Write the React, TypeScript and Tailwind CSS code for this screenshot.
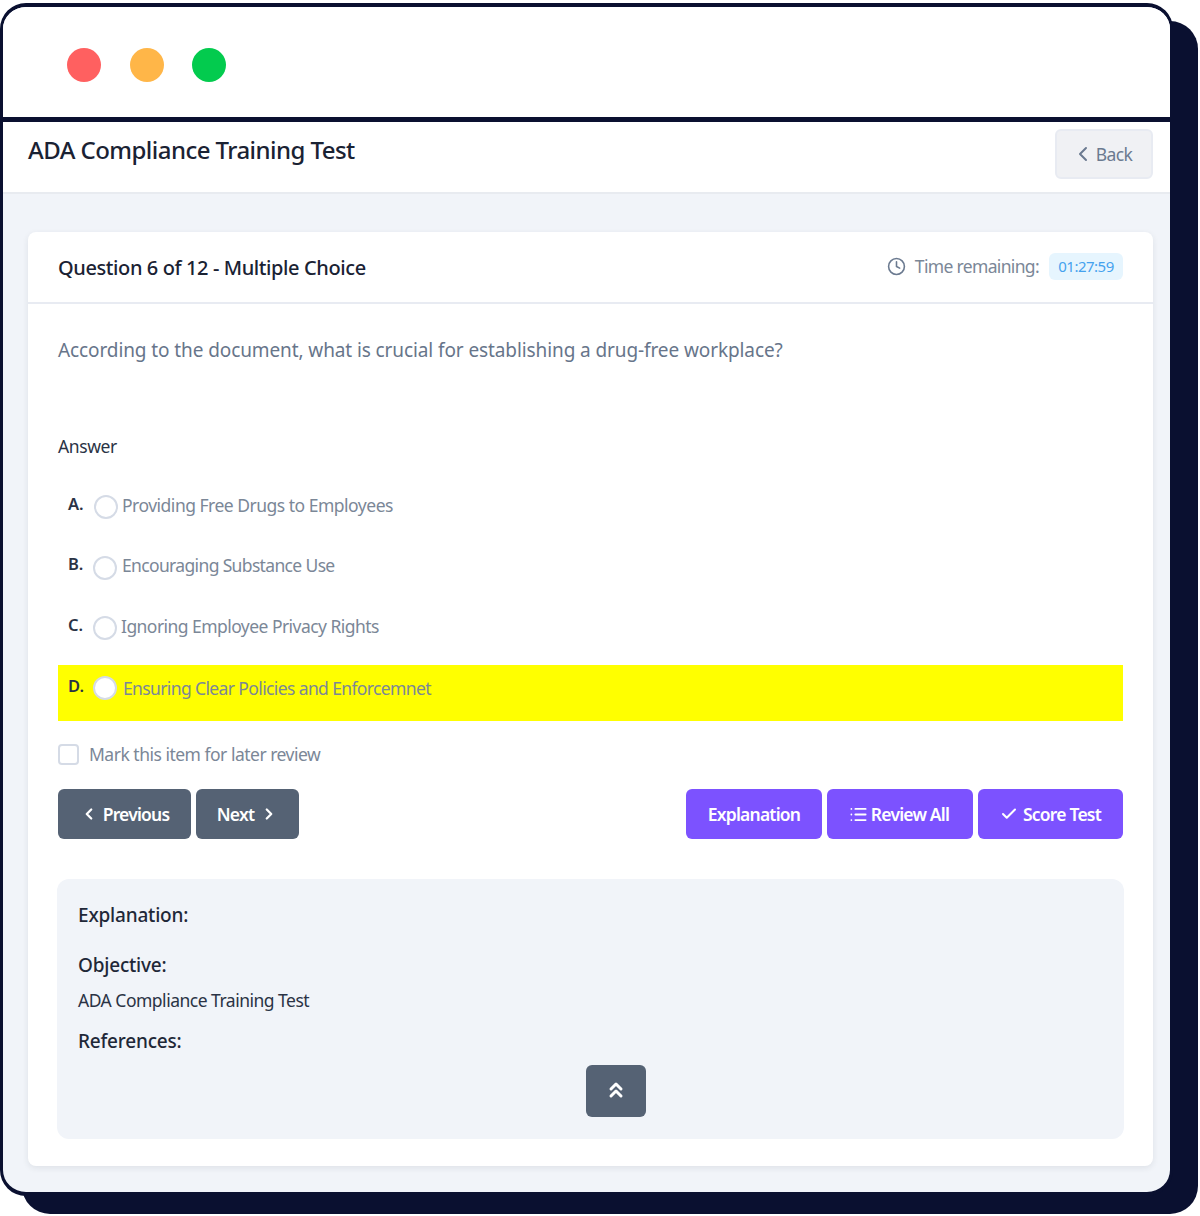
import React from 'react';
import { Check, ChevronLeft, ChevronRight, ChevronsUp, Clock, List } from 'lucide-react';

const options = [
  { letter: 'A.', text: 'Providing Free Drugs to Employees', row: 'h-[61px] pt-[20px]', radio: 'ml-[10px] mt-[3px]', label: 'ml-[4px] mt-[-1px]', track: 'tracking-[-0.5px]' },
  { letter: 'B.', text: 'Encouraging Substance Use', row: 'h-[60px] pt-[19px]', radio: 'ml-[9px] mt-[4px]', label: 'ml-[5px] mt-[-1px]', track: 'tracking-[-0.65px]' },
  { letter: 'C.', text: 'Ignoring Employee Privacy Rights', row: 'h-[72px] pt-[20px]', radio: 'ml-[9px] mt-[3px]', label: 'ml-[4px] mt-[-1px]', track: 'tracking-[-0.55px]' },
];

const navButton = 'flex h-[50px] items-center justify-center rounded-md bg-[#556274] text-[17.5px] font-semibold tracking-[-0.8px] text-white';
const purpleButton = 'flex h-[50px] items-center justify-center rounded-md bg-[#7c52ff] text-[17.5px] font-semibold tracking-[-0.8px] text-white';

export default function App() {
  return (
    <div className="relative h-[1216px] w-[1200px] overflow-hidden bg-white pt-[3px] font-['Noto_Sans',sans-serif]">
      {/* offset shadow behind the window */}
      <div className="absolute left-[22px] top-[21px] h-[1193px] w-[1176px] rounded-[28px] bg-[#0a1030]" />

      <div className="relative flex h-[1193px] w-[1173px] flex-col overflow-hidden rounded-[26px] border-[4px] border-x-[3px] border-[#0a1030] bg-[#f1f4f9]">
        {/* window chrome */}
        <div className="flex h-[110px] shrink-0 items-start gap-[29px] border-b-0 bg-white pl-[64px] pt-[41px]">
          <span className="h-[34px] w-[34px] rounded-full bg-[#ff6060]" />
          <span className="h-[34px] w-[34px] rounded-full bg-[#ffb648]" />
          <span className="ml-[-1px] h-[34px] w-[34px] rounded-full bg-[#03cb4e]" />
        </div>
        <div className="h-[5px] shrink-0 bg-[#0a1030]" />

        {/* page header */}
        <div className="flex h-[72px] shrink-0 items-start justify-between border-b-2 border-[#e8ebf0] bg-white pl-[25px] pr-[17px]">
          <h1 className="mt-[11px] text-[24px] font-medium leading-[34px] tracking-[-0.55px] text-[#1a2233]">ADA Compliance Training Test</h1>
          <button className="mt-[7px] flex h-[50px] w-[98px] items-center justify-center gap-[1px] rounded-md border-2 border-[#e8ebf2] bg-[#f0f1f4] pr-[5px] text-[17.5px] tracking-[-0.6px] text-[#6b7a90]">
            <ChevronLeft className="h-[24px] w-[24px]" strokeWidth={2} />
            Back
          </button>
        </div>

        {/* question card */}
        <div className="ml-[25px] mr-[17px] mt-[38px] h-[934px] rounded-lg bg-white shadow-[0_2px_6px_rgba(30,40,60,0.09)]">
          <div className="flex h-[72px] items-center justify-between border-b-2 border-[#e8ebf2] px-[30px]">
            <h2 className="mt-[2px] text-[20px] font-medium tracking-[-0.4px] text-[#1a2233]">Question 6 of 12 - Multiple Choice</h2>
            <div className="mb-[2px] flex items-center">
              <Clock className="h-[19px] w-[19px] text-[#6b7a90]" strokeWidth={2} />
              <span className="ml-[9px] text-[17.5px] tracking-[-0.66px] text-[#7b8797]">Time remaining:</span>
              <span className="ml-[10px] flex h-[27px] w-[74px] items-center justify-center rounded-md bg-[#e6f5fe] text-[15px] tracking-[-0.5px] text-[#45a2ee]">01:27:59</span>
            </div>
          </div>

          <div className="px-[30px]">
            <p className="mt-[30px] text-[19px] leading-[32px] tracking-[-0.1px] text-[#67758a]">According to the document, what is crucial for establishing a drug-free workplace?</p>
            <p className="mt-[66px] text-[17.5px] leading-[28px] tracking-[-0.4px] text-[#2a3345]">Answer</p>

            <div className="mt-[12px]">
              {options.map((option) => (
                <div key={option.letter} className={`flex items-start pl-[10px] ${option.row}`}>
                  <span className="w-[16px] text-[16.5px] font-semibold leading-[24px] text-[#2a3345]">{option.letter}</span>
                  <span className={`h-[24px] w-[24px] shrink-0 rounded-full border-2 border-[#d5dbe6] bg-white ${option.radio}`} />
                  <span className={`text-[17.5px] leading-[28px] text-[#7b8797] ${option.track} ${option.label}`}>{option.text}</span>
                </div>
              ))}
              <div className="flex h-[56px] items-start bg-[#ffff00] pl-[10px] pt-[10px]">
                <span className="mt-[-1px] w-[16px] text-[16.5px] font-semibold leading-[24px] text-[#2a3345]">D.</span>
                <span className="ml-[9px] mt-[1px] h-[24px] w-[24px] shrink-0 rounded-full border-2 border-[#d5dbe6] bg-white" />
                <span className="ml-[6px] mt-[-1px] text-[17.5px] leading-[28px] tracking-[-0.62px] text-[#7b8797]">Ensuring Clear Policies and Enforcemnet</span>
              </div>
            </div>

            <label className="mt-[22px] flex h-[22px] items-center">
              <span className="h-[21px] w-[21px] rounded-[4px] border-2 border-[#d5dbe6] bg-white" />
              <span className="ml-[10px] text-[17.5px] tracking-[-0.5px] text-[#7b8797]">Mark this item for later review</span>
            </label>

            <div className="mt-[24px] flex items-center">
              <button className={`${navButton} w-[133px] gap-[5px]`}>
                <ChevronLeft className="h-[18px] w-[18px]" strokeWidth={3} />
                Previous
              </button>
              <button className={`${navButton} ml-[5px] w-[103px] gap-[6px]`}>
                Next
                <ChevronRight className="h-[18px] w-[18px]" strokeWidth={3} />
              </button>
              <button className={`${purpleButton} ml-auto w-[136px]`}>Explanation</button>
              <button className={`${purpleButton} ml-[5px] w-[146px] gap-[3px] pr-[2px] tracking-[-0.4px]`}>
                <List className="h-[19px] w-[19px]" strokeWidth={2.25} />
                Review All
              </button>
              <button className={`${purpleButton} ml-[5px] w-[145px] gap-[5px]`}>
                <Check className="h-[18px] w-[18px]" strokeWidth={2.75} />
                Score Test
              </button>
            </div>

            {/* explanation panel */}
            <div className="ml-[-1px] mr-[-1px] mt-[40px] h-[260px] rounded-xl bg-[#f1f4f9] px-[21px] pt-[21px]">
              <p className="text-[19px] font-medium leading-[30px] tracking-[-0.2px] text-[#1f2838]">Explanation:</p>
              <p className="mt-[20px] text-[19px] font-medium leading-[30px] tracking-[-0.2px] text-[#1f2838]">Objective:</p>
              <p className="mt-[6px] text-[17.5px] leading-[28px] tracking-[-0.5px] text-[#2a3345]">ADA Compliance Training Test</p>
              <p className="mt-[12px] text-[19px] font-medium leading-[30px] tracking-[-0.2px] text-[#1f2838]">References:</p>
              <div className="mt-[9px] flex justify-center pl-[51px]">
                <button className="flex h-[52px] w-[60px] items-center justify-center rounded-md bg-[#556274] text-white">
                  <ChevronsUp className="mb-[3px] h-[24px] w-[24px]" strokeWidth={3} />
                </button>
              </div>
            </div>
          </div>
        </div>
      </div>
    </div>
  );
}
